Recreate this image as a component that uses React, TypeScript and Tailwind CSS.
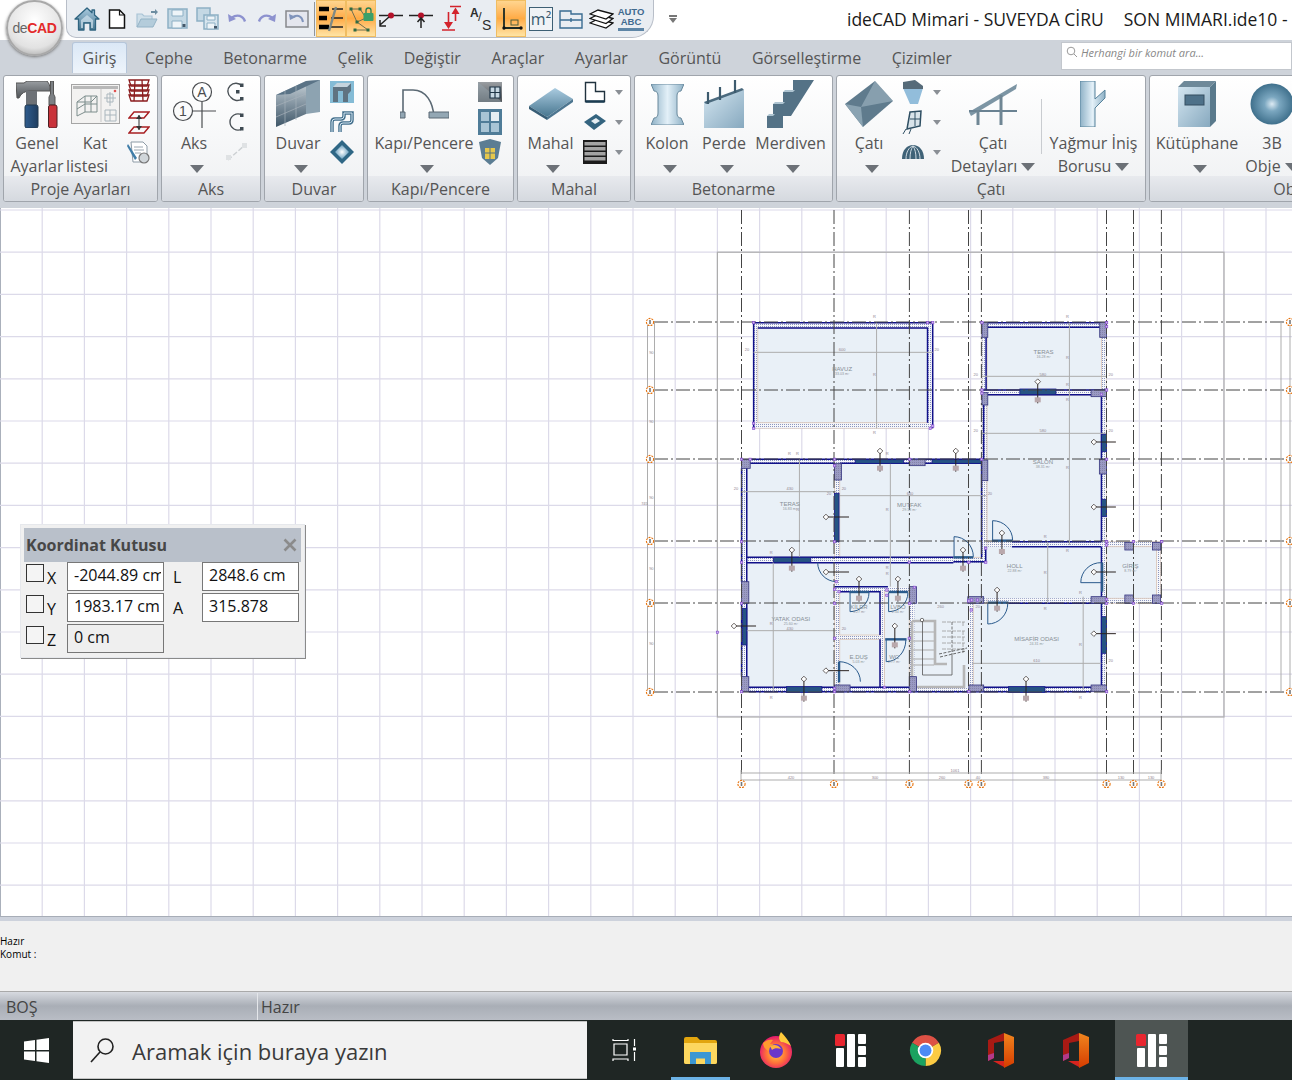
import React from "react";
import clsx from "clsx";

// plan coordinates were read off a crop, so map them back to page pixels
const X = (v: number) => 640 + v / 2.904;
const Y = (v: number) => 300 + v / 3;

type B = [number, number, number, number];

const gridX = Array.from({ length: 31 }, (_, i) => 42.2 * (i + 1));
const gridY = Array.from({ length: 17 }, (_, i) => 210 + 42.2 * i);
const axesV = [741.5, 834, 909.4, 968.5, 981.4, 1106.5, 1133.5, 1161.4];
const axesH = [322, 390, 459, 541, 603, 692];

const hatched: B[] = [
    [330, 68, 850, 385],
    [993, 68, 1355, 1175],
    [295, 478, 1008, 1175],
    [1355, 725, 1512, 910],
];
const rooms: B[] = [
    [342, 84, 835, 368],
    [1008, 82, 1340, 270],
    [1008, 285, 1340, 725],
    [310, 490, 565, 772],
    [580, 490, 992, 772],
    [580, 875, 697, 1005],
    [580, 1018, 697, 1162],
    [710, 875, 782, 1162],
    [310, 788, 565, 1162],
    [968, 910, 1340, 1162],
    [1355, 740, 1500, 895],
];
// the dark wall lines, interior partitions only get the tan edge
const navy = [
    "M330 385V68H850V385",
    "M342 84H835V368",
    "M1010 68H1340M1010 82H1335M1005 112V270M993 270H1355M1008 284H1310",
    "M998 285V478M1340 290V725M1080 725H1340",
    "M320 478H993M320 490H565M580 490H992V772M295 505V845M295 910V1130",
    "M310 490V1162M310 772H910M310 788H910M910 785H1004V740M1080 740H1340",
    "M1070 910H1340M1340 740V1162M316 1162H565M610 1162H782M998 1162H1310",
    "M316 1175H1310M580 875H697V1005M697 1018V1162M565 860H720",
];
const columns: B[] = [
    [295, 478, 320, 505],
    [565, 490, 585, 540],
    [782, 478, 828, 497],
    [993, 480, 1010, 542],
    [295, 845, 316, 910],
    [1334, 478, 1355, 522],
    [993, 68, 1010, 112],
    [1335, 68, 1355, 112],
    [993, 278, 1010, 315],
    [1310, 270, 1355, 290],
    [782, 860, 803, 910],
    [952, 890, 998, 910],
    [1310, 890, 1355, 910],
    [1408, 727, 1433, 750],
    [1488, 727, 1512, 750],
    [1408, 885, 1433, 910],
    [1488, 885, 1512, 910],
    [295, 1130, 316, 1175],
    [565, 1155, 610, 1175],
    [782, 1130, 803, 1175],
    [955, 1155, 998, 1175],
    [1310, 1155, 1355, 1175],
];
const windows: B[] = [
    [1103, 267, 1208, 284],
    [388, 772, 496, 787],
    [625, 479, 765, 490],
    [848, 479, 992, 490],
    [425, 1160, 528, 1177],
    [1070, 1160, 1176, 1177],
    [1340, 403, 1355, 455],
    [1340, 598, 1355, 650],
    [1340, 950, 1355, 1060],
    [298, 925, 310, 1035],
    [565, 580, 578, 725],
];
const doors: [number, number, number, number, number][] = [
    [1024, 662, 1082, 720, 1],
    [912, 710, 968, 770, 1],
    [610, 935, 665, 878, 0],
    [722, 935, 778, 878, 0],
    [715, 1085, 772, 1020, 0],
    [1010, 972, 1068, 910, 0],
    [578, 1085, 640, 1145, 1],
];
const dims: B[] = [
    [687, 68, 687, 385],
    [1247, 68, 1247, 735],
    [463, 478, 463, 772],
    [727, 490, 727, 860],
    [387, 770, 387, 1175],
    [1184, 725, 1184, 910],
    [1287, 890, 1287, 1170],
    [330, 157, 850, 157],
    [990, 229, 1355, 229],
    [990, 400, 1355, 400],
    [295, 575, 570, 575],
    [580, 587, 1005, 587],
    [300, 992, 570, 992],
    [965, 1090, 1340, 1090],
];
const markV: [number, number, number][] = [
    [1155, 245, 310], [697, 453, 515], [917, 453, 515], [441, 750, 815],
    [636, 837, 905], [749, 837, 905], [740, 978, 1045], [1051, 699, 765],
    [938, 750, 815], [1037, 870, 935], [476, 1137, 1205], [1121, 1137, 1205],
];
const markH: [number, number, number][] = [
    [1318, 426, 1382], [1318, 621, 1382], [540, 651, 607], [540, 816, 607],
    [273, 978, 337], [540, 1112, 607], [1318, 816, 1382], [1318, 1001, 1382],
];
const labels: [string, string, number, number][] = [
    ["TERAS", "16.28 m²", 1172, 155],
    ["HAVUZ", "33.03 m²", 587, 207],
    ["SALON", "38.31 m²", 1170, 485],
    ["TERAS", "16.83 m²", 435, 611],
    ["MUTFAK", "29.18 m²", 782, 616],
    ["HOLL", "22.88 m²", 1088, 798],
    ["GİRİŞ", "8.79 m²", 1424, 798],
    ["KİLER", "3.27 m²", 636, 920],
    ["LVBO", "2.34 m²", 749, 920],
    ["YATAK ODASI", "25.60 m²", 438, 957],
    ["MİSAFİR ODASI", "24.31 m²", 1152, 1016],
    ["E.DUŞ", "5.03 m²", 635, 1071],
    ["WC", "2.77 m²", 738, 1072],
];
const nodes: [number, number][] = [
    [330, 68], [835, 68], [850, 68], [330, 370], [330, 385], [850, 378], [843, 385],
    [993, 68], [1355, 68], [1355, 80], [993, 270], [993, 280], [1355, 270], [1340, 283],
    [295, 478], [320, 478], [565, 478], [565, 497], [783, 478], [992, 478], [1355, 478],
    [295, 725], [565, 725], [1004, 745], [1355, 725], [1355, 735], [1433, 725], [1515, 725],
    [295, 787], [570, 845], [782, 787], [955, 787], [1004, 787],
    [565, 868], [578, 875], [717, 870], [717, 886], [797, 862],
    [295, 910], [565, 910], [783, 910], [955, 903], [963, 900], [980, 900], [962, 930],
    [1355, 898], [1355, 910], [1433, 910], [1515, 910], [225, 997],
    [565, 1015], [782, 1015], [710, 1162],
    [295, 1175], [565, 1165], [565, 1175], [783, 1175], [955, 1175], [1355, 1175],
];
const tiny: [string, number, number][] = [
    ["R", 681, 50], ["R", 1241, 50], ["20", 311, 149], ["20", 862, 149], ["600", 587, 149],
    ["R", 681, 224], ["R", 1241, 173], ["R", 1241, 252], ["R", 1241, 297], ["R", 681, 398],
    ["20", 975, 224], ["20", 1367, 224], ["580", 1170, 224], ["20", 975, 392], ["20", 1367, 392],
    ["580", 1170, 392], ["R", 1241, 503], ["R", 434, 460], ["R", 457, 460], ["R", 718, 460],
    ["20", 279, 566], ["430", 435, 566], ["20", 549, 580], ["20", 592, 566], ["640", 784, 581],
    ["20", 1016, 580], ["R", 458, 628], ["R", 718, 628], ["R", 1177, 708], ["R", 1241, 752],
    ["R", 381, 756], ["R", 718, 802], ["R", 718, 820], ["R", 1177, 816], ["R", 1279, 878],
    ["R", 1177, 925], ["260", 873, 919], ["20", 981, 919], ["430", 435, 986], ["R", 381, 970],
    ["20", 592, 985], ["R", 1279, 1034], ["610", 1152, 1081], ["20", 1367, 1081],
    ["R", 381, 1191], ["R", 1279, 1191], ["90", 33, 158], ["90", 33, 365], ["90", 33, 592],
    ["90", 33, 805], ["90", 33, 1030], ["745", 13, 610],
];
const bottomTiny: [string, number][] = [
    ["420", 791], ["300", 875], ["260", 942], ["40", 978], ["380", 1046], ["130", 1121], ["130", 1151],
];

function toPage(d: string) {
    // walk the short path strings and convert each number to page pixels
    return d.replace(/([MHVL])([\d.]+)(?: ([\d.]+))?/g, (_, c, a, b) => {
        if (c === "H") return `H${X(+a)}`;
        if (c === "V") return `V${Y(+a)}`;
        return `${c}${X(+a)} ${Y(+b)}`;
    });
}

function Rect({ b, ...rest }: { b: B } & React.SVGProps<SVGRectElement>) {
    return <rect x={X(b[0])} y={Y(b[1])} width={X(b[2]) - X(b[0])} height={Y(b[3]) - Y(b[1])} {...rest} />;
}

function Bubble({ x, y }: { x: number; y: number }) {
    return (
        <g>
            <circle cx={x} cy={y} r={3.6} fill="white" stroke="#e8730c" strokeWidth={1.1} strokeDasharray="2 1" />
            <rect x={x - 0.8} y={y - 2} width={1.6} height={4} fill="#777" />
        </g>
    );
}

function Stairs() {
    const steps = [621, 632, 641, 650, 659, 665];
    return (
        <g fill="none">
            <path d="M912 621V687H964V665M912 621H935V664H947" stroke="#b6b6b6" strokeWidth={2.6} />
            {steps.map((y) => (
                <path key={y} d={`M913 ${y}H934`} stroke="#b6b6b6" strokeWidth={1.2} />
            ))}
            {[622, 631, 637, 643, 649].map((y) => (
                <path key={y} d={`M942 ${y}H965M963 ${y}v4`} stroke="#999" strokeWidth={0.8} strokeDasharray="4 1" />
            ))}
            <path d="M922.5 620V675H952V653" stroke="#555" strokeWidth={0.8} />
            <path d="M939 654L967 648M940 657L966 651" stroke="#444" strokeWidth={0.8} strokeDasharray="3 1.5" />
            <path d="M952 622V652" stroke="#555" strokeWidth={0.8} strokeDasharray="3 1.5" />
            <circle cx={922} cy={620} r={1.7} fill="white" stroke="#444" strokeWidth={0.7} />
        </g>
    );
}

function Drawing() {
    return (
        <svg viewBox="0 208 1292 708" className="block h-full w-full">
            <defs>
                <pattern id="dots" width="2" height="2" patternUnits="userSpaceOnUse">
                    <rect width="2" height="2" fill="#f6f7fa" />
                    <rect width="1" height="1" fill="#8b96bf" />
                </pattern>
                <pattern id="col" width="2" height="2" patternUnits="userSpaceOnUse">
                    <rect width="2" height="2" fill="#9a9ac4" />
                    <rect width="1" height="1" fill="#8585a8" />
                </pattern>
            </defs>
            <g stroke="#dcdae9" strokeWidth={1.2}>
                {gridX.map((x) => (
                    <line key={x} x1={x} x2={x} y1={208} y2={916} />
                ))}
                {gridY.map((y) => (
                    <line key={y} x1={0} x2={1292} y1={y} y2={y} />
                ))}
            </g>
            <rect x={717.4} y={252.2} width={506.6} height={464.8} fill="none" stroke="#adadad" strokeWidth={1.2} />

            {/* plan */}
            {hatched.map((b, i) => (
                <Rect key={i} b={b} fill="url(#dots)" stroke="#d8c9c2" strokeWidth={0.8} />
            ))}
            <path
                d={toPage("M580 788H1005V740H1340V895H968V910H955V1162H797V862H580Z")}
                fill="#e9f0f7"
            />
            {rooms.map((b, i) => (
                <Rect key={i} b={b} fill="#e9f0f7" stroke="#dcc9bd" strokeWidth={0.9} />
            ))}
            <Stairs />
            {navy.map((d) => (
                <path key={d} d={toPage(d)} fill="none" stroke="#10108a" strokeWidth={1.5} />
            ))}
            {dims.map((b, i) => (
                <line key={i} x1={X(b[0])} y1={Y(b[1])} x2={X(b[2])} y2={Y(b[3])} stroke="#adadad" strokeWidth={1} />
            ))}
            {columns.map((b, i) => (
                <Rect key={i} b={b} fill="url(#col)" stroke="#34347e" strokeWidth={0.8} />
            ))}
            {windows.map((b, i) => (
                <Rect key={i} b={b} fill="#265483" stroke="#16168e" strokeWidth={0.8} />
            ))}
            <g fill="none" stroke="#2a5a8c" strokeWidth={1}>
                {doors.map((d, i) => (
                    <path
                        key={i}
                        d={`M${X(d[0])} ${Y(d[3])}L${X(d[0])} ${Y(d[1])}A${X(d[2]) - X(d[0])} ${Math.abs(Y(d[3]) - Y(d[1]))} 0 0 ${d[4]} ${X(d[2])} ${Y(d[3])}`}
                    />
                ))}
                <path d={`M${X(516)} ${Y(788)}A19 19 0 0 0 ${X(570)} ${Y(845)}`} />
                <path d={`M${X(1340)} ${Y(788)}A20 20 0 0 0 ${X(1280)} ${Y(848)}H${X(1340)}`} />
            </g>
            <g stroke="#2a5a8c" strokeWidth={2.4}>
                <path d={`M${X(1022)} ${Y(722)}H${X(1082)}`} />
                <path d={`M${X(910)} ${Y(772)}H${X(968)}`} />
                <path d={`M${X(608)} ${Y(876)}H${X(666)}`} />
                <path d={`M${X(722)} ${Y(876)}H${X(778)}`} />
                <path d={`M${X(712)} ${Y(1018)}H${X(774)}`} />
                <path d={`M${X(1010)} ${Y(908)}H${X(1070)}`} />
                <path d={`M${X(1342)} ${Y(788)}V${Y(875)}`} />
                <path d={`M${X(578)} ${Y(1085)}V${Y(1147)}`} />
            </g>

            {/* axes */}
            <g stroke="#444" strokeWidth={1} strokeDasharray="14 3 2 3">
                {axesV.map((x) => (
                    <line key={x} x1={x} x2={x} y1={210} y2={776} />
                ))}
                {axesH.map((y) => (
                    <line key={y} x1={654} x2={1288} y1={y} y2={y} />
                ))}
            </g>
            <g stroke="#adadad" strokeWidth={1} fill="none">
                <path d="M647.500 322V692M654.500 322V692M1281 322V692M1290 322V692" />
                <path d="M741 773H1161M741 780H1161M741 770V782M1161 770V782" />
            </g>
            {axesH.map((y) => (
                <g key={y}>
                    <Bubble x={650} y={y} />
                    <Bubble x={1290} y={y} />
                </g>
            ))}
            {axesV.map((x) => (
                <Bubble key={x} x={x} y={784} />
            ))}

            {/* level marks */}
            <g stroke="#2b2320" strokeWidth={1}>
                {markV.map(([x, a, b]) => (
                    <g key={x + "-" + a}>
                        <line x1={X(x)} x2={X(x)} y1={Y(a)} y2={Y(b)} />
                        <path
                            d={`M${X(x) - 2.8} ${Y(a)}L${X(x)} ${Y(a) - 2.8}L${X(x) + 2.8} ${Y(a)}L${X(x)} ${Y(a) + 2.8}Z`}
                            fill="white"
                            strokeWidth={0.7}
                        />
                        <rect x={X(x) - 3} y={Y(b - 18)} width={6} height={5} fill="#b9a8ac" stroke="none" />
                    </g>
                ))}
                {markH.map(([a, y, b]) => (
                    <g key={a + "-" + y}>
                        <line x1={X(a)} x2={X(b)} y1={Y(y)} y2={Y(y)} />
                        <path
                            d={`M${X(a) - 2.8} ${Y(y)}L${X(a)} ${Y(y) - 2.8}L${X(a) + 2.8} ${Y(y)}L${X(a)} ${Y(y) + 2.8}Z`}
                            fill="white"
                            strokeWidth={0.7}
                        />
                    </g>
                ))}
            </g>
            {nodes.map(([x, y], i) => (
                <rect key={i} x={X(x) - 1.2} y={Y(y) - 1.2} width={2.4} height={2.4} fill="#cdb6ee" stroke="#8245cf" strokeWidth={0.6} />
            ))}

            {/* small print */}
            <g fontFamily="Liberation Sans, sans-serif" textAnchor="middle">
                {labels.map(([a, b, x, y]) => (
                    <g key={a + x}>
                        <text x={X(x)} y={Y(y) + 2} fontSize={6} fill="#868e95">{a}</text>
                        <text x={X(x)} y={Y(y) + 6} fontSize={3.6} fill="#90969b">{b}</text>
                    </g>
                ))}
                {tiny.map(([t, x, y], i) => (
                    <text key={i} x={X(x)} y={Y(y) + 1.5} fontSize={4} fill="#8f8590">{t}</text>
                ))}
                <text x={955} y={772} fontSize={4} fill="#8f8590">1061</text>
                {bottomTiny.map(([t, x]) => (
                    <text key={x} x={x} y={779} fontSize={4} fill="#8f8590">{t}</text>
                ))}
            </g>
        </svg>
    );
}

// quick access icons
const steel = "#a9c4d6";

function Home() {
    return (
        <svg width="26" height="24" viewBox="0 0 26 24">
            <path d="M13 1L1 12h3.500v11H10v-7h6v7h5.500V12H25L20.500 8V3H18v2.800z" fill="url(#gSteel)" stroke="#2f6480" strokeWidth="1.300" strokeLinejoin="round" />
            <path d="M7 13l6-5 6 5v8h-2v-6H9v6H7z" fill="#d8e8f2" opacity=".65" />
        </svg>
    );
}
function Doc() {
    return (
        <svg width="18" height="20" viewBox="0 0 18 20">
            <path d="M1.500 1h10l5 5v13h-15z" fill="white" stroke="#111" strokeWidth="1.500" />
            <path d="M11.500 1v5h5" fill="none" stroke="#111" strokeWidth="1.200" />
        </svg>
    );
}
function OpenFolder() {
    return (
        <svg width="23" height="20" viewBox="0 0 23 20">
            <path d="M1 18V5h5l2 2h8v3" fill="#cfdfe9" stroke={steel} strokeWidth="1.200" />
            <path d="M1 18l4-8h16l-4 8z" fill="#b4ccdb" stroke="#94b3c6" />
            <path d="M15 2h4V0l3 3-3 3V4h-4z" fill="#6d8da1" />
        </svg>
    );
}
function Save() {
    return (
        <svg width="21" height="21" viewBox="0 0 21 21">
            <path d="M1 1h19v19H1z" fill="#c4d8e4" stroke="#8db0c5" strokeWidth="1.500" />
            <path d="M5 2h11v6H5z" fill="#eef4f8" stroke="#8db0c5" />
            <path d="M5 13h10v7H5z" fill="#eef4f8" stroke="#8db0c5" />
            <rect x="15.500" y="16" width="3" height="3" fill="#44586a" />
        </svg>
    );
}
function SaveAll() {
    return (
        <svg width="23" height="23" viewBox="0 0 23 23">
            <path d="M1 1h13v13H1z" fill="#c4d8e4" stroke="#8db0c5" strokeWidth="1.500" />
            <path d="M8 8h14v14H8z" fill="#d7e5ee" stroke="#8db0c5" strokeWidth="1.500" />
            <path d="M11 9h8v4h-8zM11 16h8v6h-8z" fill="#eef4f8" stroke="#8db0c5" />
            <rect x="18" y="19" width="3" height="2.500" fill="#44586a" />
        </svg>
    );
}
function Undo({ flip }: { flip?: boolean }) {
    return (
        <svg width="20" height="14" viewBox="0 0 20 14" className={clsx(flip && "-scale-x-100")}>
            <path d="M5 5.500c5-3.500 11-2 13 4" fill="none" stroke="#8d92cf" strokeWidth="2.400" />
            <path d="M1 2l1 8 7-3z" fill="#8d92cf" />
        </svg>
    );
}
function BackBox() {
    return (
        <svg width="24" height="18" viewBox="0 0 24 18">
            <rect x="1" y="1" width="22" height="16" fill="#e4e6ee" stroke="#86888c" strokeWidth="1.500" />
            <path d="M8 7c5-2.500 9-1 10 5" fill="none" stroke="#7f93bb" strokeWidth="2" />
            <path d="M4 4l1 6 6-3z" fill="#7f93bb" />
        </svg>
    );
}
function Layers() {
    return (
        <svg width="26" height="26" viewBox="0 0 26 26">
            <path d="M1 3h10M1 12h8M1 21h10" stroke="#000" strokeWidth="4.500" />
            <path d="M14 3h11M13 12h12M12 21h13" stroke="#222" strokeWidth="1.500" />
            <path d="M11 25L18 1" stroke="#7f8a86" strokeWidth="2.400" />
        </svg>
    );
}
function LockSnap() {
    return (
        <svg width="26" height="26" viewBox="0 0 26 26">
            <path d="M3 3h9l6 9-9 4 11 8H7M3 3l6 13" fill="none" stroke="#6f6f50" strokeWidth="1" />
            {[[3, 3], [12, 3], [9, 16], [7, 24], [20, 24]].map(([x, y]) => (
                <rect key={x + "-" + y} x={x - 1.5} y={y - 1.5} width="3" height="3" fill="#2f6b45" />
            ))}
            <path d="M18 7V4.500a2.500 2.500 0 015 0V7" fill="none" stroke="#2b7f52" strokeWidth="1.300" />
            <rect x="15.500" y="7" width="10" height="8" rx="1" fill="#3aa06a" />
        </svg>
    );
}
function Snap({ side }: { side?: boolean }) {
    return (
        <svg width="26" height="20" viewBox="0 0 26 20">
            <path d="M1 6.500h24" stroke="#222" strokeWidth="1.500" />
            <circle cx="13" cy="6.500" r="3" fill="#b3122a" />
            {side ? (
                <path d="M11 8L2 16M2 11v6h6" fill="none" stroke="#222" strokeWidth="1.500" />
            ) : (
                <path d="M13 19V9M9.500 13L13 9l3.500 4" fill="none" stroke="#222" strokeWidth="1.500" />
            )}
        </svg>
    );
}
function RedArrows() {
    return (
        <svg width="21" height="27" viewBox="0 0 21 27">
            <path d="M9 1.500h11M14.500 9v7M1 25h13M7.500 7v10" stroke="#d3232c" strokeWidth="1.600" fill="none" />
            <path d="M14.500 2.500L10.500 9h8zM7.500 24L3 17h9z" fill="#d3232c" />
        </svg>
    );
}
function AS() {
    return (
        <svg width="22" height="26" viewBox="0 0 22 26" fontFamily="Liberation Sans, sans-serif" fill="#2c2c2c">
            <text x="0" y="11" fontSize="12" fontWeight="700">A</text>
            <text x="8" y="15" fontSize="13">/</text>
            <text x="12" y="24" fontSize="14">S</text>
        </svg>
    );
}
function Dim() {
    return (
        <svg width="26" height="26" viewBox="0 0 26 26">
            <path d="M6 2v20h18" fill="none" stroke="#1d2a24" strokeWidth="1.800" />
            <rect x="13" y="14" width="7" height="5" fill="none" stroke="#4e5d3a" strokeWidth="1" />
            <circle cx="6" cy="22" r="1.700" fill="#111" />
            <circle cx="23" cy="22" r="1.700" fill="#111" />
        </svg>
    );
}
function Plan() {
    return (
        <svg width="24" height="21" viewBox="0 0 24 21">
            <path d="M1 3h11v3h11v14H1zM1 12h22M12 10v4" fill="none" stroke="#3a6c92" strokeWidth="1.400" />
        </svg>
    );
}
function Stack() {
    return (
        <svg width="25" height="21" viewBox="0 0 25 21">
            <g fill="white" stroke="#111" strokeWidth="1.300">
                <path d="M1 15l8-4 15 4-7 5z" />
                <path d="M1 10.500l8-4 15 4-7 5z" />
                <path d="M1 6l8-4 15 4-7 5z" />
            </g>
        </svg>
    );
}

function Qa({ children, on }: { children?: React.ReactNode; on?: boolean }) {
    return (
        <div
            className={clsx(
                "flex h-[37px] w-[30px] shrink-0 items-center justify-center",
                on && "bg-linear-to-b from-[#ffd792] via-[#ffab44] to-[#ffe7a8] shadow-[inset_0_0_0_1px_#f0bd62]"
            )}
        >
            {children}
        </div>
    );
}

// ribbon icons
function Hammer() {
    return (
        <svg width="42" height="47" viewBox="0 0 42 47">
            <path d="M0 2h8l3-2h20q3 3 3 7v3H14Q6 10 3 17H1z" fill="url(#gDark)" stroke="#555" />
            <rect x="10" y="10" width="11" height="14" fill="#6d7176" />
            <rect x="9" y="24" width="13" height="23" rx="2" fill="url(#gBlue)" stroke="#20384f" />
            <path d="M34.500 0h3v13l1.500 3v8h-6v-8l1.500-3z" fill="#7c8084" stroke="#555" />
            <rect x="32.500" y="24" width="8.500" height="23" rx="2" fill="#c9323a" stroke="#4a1f22" />
        </svg>
    );
}
function KatIcon() {
    return (
        <svg width="49" height="40" viewBox="0 0 49 40">
            <rect x=".5" y=".5" width="48" height="39" fill="#f3f2f1" stroke="#a5a5a5" />
            <rect x="2" y="2" width="45" height="3" fill="#b8b8b8" />
            <circle cx="44" cy="7" r="1.300" fill="#e05050" />
            <path d="M30 5v33" stroke="#c7c7c7" />
            <path d="M6 18l8-6h12M6 18v14M14 12v16M6 32l8-4h12M6 25l8-5h12M26 12v16M20 12v16M6 18h14l6-6" fill="none" stroke="#7d8d8c" />
            <path d="M33 14h12M39 8v14M36 10h6v8h-6zM34 26h11v11H34zM34 31h11M39 26v11" fill="none" stroke="#aab6bd" />
        </svg>
    );
}
function RedStack() {
    return (
        <svg width="22" height="26" viewBox="0 0 22 26">
            <g fill="none" stroke="#8b1c1e" strokeWidth="1.300">
                {[1, 6, 11, 16].map((y) => (
                    <path key={y} d={`M1 ${y}h20l-2 6H3z`} />
                ))}
                <path d="M7 1l-1 21M14 1l1 21" />
            </g>
        </svg>
    );
}
function RedLevel() {
    return (
        <svg width="22" height="24" viewBox="0 0 22 24">
            <path d="M6 2h15l-5 6H1zM6 17h15l-5 6H1z" fill="none" stroke="#a81f22" strokeWidth="1.400" />
            <path d="M11 5v15" stroke="#333" />
            <path d="M8 9l3-4 3 4zM8 16l3 4 3-4z" fill="#333" />
        </svg>
    );
}
function Report() {
    return (
        <svg width="24" height="24" viewBox="0 0 24 24">
            <path d="M4 2h12l4 4v16H6z" fill="white" stroke="#8d9ba6" />
            <path d="M7 7h9M7 10h10M8 13h6" stroke="#9aa6b0" />
            <path d="M1 4l9 14-2 2L0 6z" fill="#3f7da8" />
            <circle cx="17" cy="18" r="5" fill="#d0d6da" stroke="#777" strokeWidth="1.200" />
        </svg>
    );
}
function AksIcon() {
    return (
        <svg width="44" height="47" viewBox="0 0 44 47" fontFamily="Liberation Sans, sans-serif">
            <g fill="none" stroke="#4a4d50" strokeWidth="1.200">
                <circle cx="30" cy="11" r="9.500" />
                <circle cx="11" cy="30" r="9.500" />
                <path d="M30 21v26M21 30h23" />
            </g>
            <text x="30" y="16" fontSize="14" textAnchor="middle" fill="#4a4d50">A</text>
            <text x="11" y="35" fontSize="14" textAnchor="middle" fill="#4a4d50">1</text>
        </svg>
    );
}
function Arc({ open }: { open?: boolean }) {
    return (
        <svg width="20" height="20" viewBox="0 0 20 20">
            <path d={open ? "M15 4A8 8 0 104 15.500 8 8 0 0015 17" : "M15 3A8 8 0 003 10a8 8 0 0012 7"} fill="none" stroke="#4b5257" strokeWidth="1.400" />
            <rect x="13" y="1.500" width="3.500" height="3.500" fill="#3e4a52" />
            <rect x="13" y="15" width="3.500" height="3.500" fill="#3e4a52" />
            {open && <rect x="9" y="8" width="3.500" height="3.500" fill="#3e4a52" />}
        </svg>
    );
}
function AxisFaint() {
    return (
        <svg width="24" height="22" viewBox="0 0 24 22">
            <path d="M3 19L21 3" stroke="#ccd0d3" strokeWidth="1.400" strokeDasharray="5 2" />
            <rect x="1" y="14" width="5" height="5" fill="#dfe2e4" />
            <rect x="17" y="2" width="5" height="5" fill="#dfe2e4" />
        </svg>
    );
}
function WallIcon() {
    return (
        <svg width="44" height="48" viewBox="0 0 44 48">
            <path d="M0 15L30 1v33L0 47z" fill="url(#gWall)" />
            <path d="M30 1l14-1v32l-14 2z" fill="#8da3b1" />
            <path d="M0 15L30 1l14-1-30 14z" fill="#5a7386" />
            <path d="M9 11v35M20 6v34M0 26l30-12M0 37l30-13" stroke="#a7b2ba" strokeWidth=".7" />
        </svg>
    );
}
function WallCorner() {
    return (
        <svg width="24" height="22" viewBox="0 0 24 22">
            <path d="M0 0h24v22H0z" fill="#85bcd6" />
            <path d="M3 21V6h14l4-4v8l-3 3v8h-5V10H8v11z" fill="#5f7381" />
            <path d="M3 6l4-4h14l-4 4z" fill="#c5d4dd" />
        </svg>
    );
}
function WallCurve() {
    return (
        <svg width="24" height="22" viewBox="0 0 24 22">
            <path d="M2 21V11q0-3 3-3h6q3 0 3-3V2h8v7q0 3-3 3h-6q-3 0-3 3v6" fill="none" stroke="#436f8c" strokeWidth="3.500" />
            <path d="M2 21V11q0-3 3-3h6q3 0 3-3V2h8v7q0 3-3 3h-6q-3 0-3 3v6" fill="none" stroke="#d4e6f1" strokeWidth="1" />
        </svg>
    );
}
function WallDiamond() {
    return (
        <svg width="24" height="24" viewBox="0 0 24 24">
            <path d="M12 0l12 12-12 12L0 12z" fill="#2f6785" />
            <path d="M12 5l7 7-7 7-7-7z" fill="url(#gGlow)" />
        </svg>
    );
}
function DoorIcon() {
    return (
        <svg width="49" height="32" viewBox="0 0 49 32">
            <path d="M3 29V2h10c13 0 20 12 21 27" fill="none" stroke="#5b6974" strokeWidth="1.600" />
            <path d="M0 24h5v6H0zM29 24h20v6H29z" fill="#93a7b4" stroke="#5b6974" />
        </svg>
    );
}
function WinA() {
    return (
        <svg width="24" height="20" viewBox="0 0 24 20">
            <rect width="24" height="20" fill="url(#gDark)" />
            <path d="M0 0l24 20H0z" fill="#96a5af" opacity=".5" />
            <path d="M12 5h10v11H12zM17 5v11M12 10.500h10" fill="#c7d8e3" stroke="#1e3546" strokeWidth="1.200" />
        </svg>
    );
}
function WinB() {
    return (
        <svg width="24" height="26" viewBox="0 0 24 26">
            <rect width="24" height="26" fill="#4f7c98" />
            <path d="M3 3h8v9H3zM13 3h8v9h-8zM3 14h8v9H3zM13 14h8v9h-8z" fill="#a8c4d5" />
            <path d="M13 3h8v9h-8z" fill="#e6eef3" />
        </svg>
    );
}
function WinC() {
    return (
        <svg width="24" height="26" viewBox="0 0 24 26">
            <path d="M1 3l11-3 11 3-3 16-8 7-8-7z" fill="#5b7d93" />
            <path d="M7 9h10v11H7z" fill="#e6c84d" />
            <path d="M12 9v11M7 14h10" stroke="#54707f" />
        </svg>
    );
}
function SlabIcon() {
    return (
        <svg width="44" height="32" viewBox="0 0 44 32">
            <path d="M0 18L26 0l18 11-26 18z" fill="url(#gSteel)" />
            <path d="M0 18l18 11v3L0 21z" fill="#375d75" />
            <path d="M18 29l26-18v3L18 32z" fill="#4d7690" />
        </svg>
    );
}
function LShape() {
    return (
        <svg width="22" height="22" viewBox="0 0 22 22">
            <path d="M1.500 1.500h10v9h9v10h-19z" fill="white" stroke="#20323e" strokeWidth="1.400" />
            <path d="M1.500 20.500h19" stroke="#1b3c52" strokeWidth="2.500" />
        </svg>
    );
}
function Tile() {
    return (
        <svg width="22" height="16" viewBox="0 0 22 16">
            <path d="M0 8l12-8 10 7-12 9z" fill="#34647f" />
            <path d="M7 7l5-3 4 3-5 3z" fill="#e6eef2" />
        </svg>
    );
}
function Lines() {
    return (
        <svg width="24" height="24" viewBox="0 0 24 24">
            <rect width="24" height="24" fill="#1b1b1b" />
            {[2, 7, 12, 17].map((y) => (
                <rect key={y} x="1.500" y={y} width="21" height="3.500" fill="#a3a3a3" />
            ))}
        </svg>
    );
}
function KolonIcon() {
    return (
        <svg width="33" height="41" viewBox="0 0 33 41">
            <path d="M0 0h33l-3 7c-3 0-4 2-4 5v17c0 3 1 5 4 5l3 7H0l3-7c3 0 4-2 4-5V12c0-3-1-5-4-5z" fill="url(#gColumn)" stroke="#68889c" />
        </svg>
    );
}
function PerdeIcon() {
    return (
        <svg width="40" height="48" viewBox="0 0 40 48">
            <path d="M0 22L40 10v38H0z" fill="url(#gPanel)" />
            <path d="M0 22l38-14 2 2L2 24z" fill="#4b6a7e" />
            <path d="M4 12v12M16 7v13M31 0v13" stroke="#3d5b6e" strokeWidth="2.200" />
        </svg>
    );
}
function StairIcon() {
    return (
        <svg width="47" height="48" viewBox="0 0 47 48">
            <path d="M0 48V36h6V24h10V12h10V0h21L24 36h-8v12z" fill="#547286" />
            <path d="M6 24h10l2-2H8zM16 12h10l2-2H18zM0 36h6l2-2H2z" fill="#aec4d1" />
        </svg>
    );
}
function RoofIcon() {
    return (
        <svg width="48" height="46" viewBox="0 0 48 46">
            <path d="M0 23L30 0l18 20-30 26z" fill="#5f7b8d" />
            <path d="M0 23l16 3 2 20z" fill="#8aa3b2" />
            <path d="M16 26L30 0l18 20z" fill="#b9cbd6" opacity=".45" />
        </svg>
    );
}
function Dormer() {
    return (
        <svg width="24" height="26" viewBox="0 0 24 26">
            <path d="M2 9h20l-5 16H9z" fill="#92bddb" />
            <path d="M2 3l12-2 8 6v3H2z" fill="#566b79" />
        </svg>
    );
}
function Skylight() {
    return (
        <svg width="24" height="24" viewBox="0 0 24 24">
            <path d="M9 2l11-1-1 15-13 3z" fill="#d9e4ea" stroke="#2f4f63" strokeWidth="1.500" />
            <path d="M9 9h10M14 2v14" stroke="#2f4f63" />
            <path d="M5 19L2 24M10 19l-2 5" stroke="#2f4f63" />
        </svg>
    );
}
function Dome() {
    return (
        <svg width="24" height="14" viewBox="0 0 24 14">
            <path d="M1 14C1 5 6 0 12 0s11 5 11 14z" fill="#3f6277" />
            <path d="M5 14C5 7 8 2 12 1M9 14c0-6 1-10 3-13M15 14c0-6-1-10-3-13M19 14c0-7-3-12-7-13" stroke="#cfdae1" fill="none" />
        </svg>
    );
}
function RoofDetail() {
    return (
        <svg width="48" height="42" viewBox="0 0 48 42">
            <path d="M0 29L48 1l-1 5L2 33z" fill="#7c95a4" />
            <path d="M0 29h48" stroke="#6a8292" strokeWidth="2" transform="translate(0 -1)" />
            <path d="M9 27v15M32 12v30" stroke="#6f8694" strokeWidth="3" />
        </svg>
    );
}
function PipeIcon() {
    return (
        <svg width="27" height="46" viewBox="0 0 27 46">
            <path d="M0 0h15v18l10-9v8L15 27v19H0z" fill="url(#gColumn)" stroke="#56829b" />
        </svg>
    );
}
function LibIcon() {
    return (
        <svg width="38" height="46" viewBox="0 0 38 46">
            <path d="M0 6h32v40H0z" fill="url(#gPanel)" />
            <path d="M0 6l6-6h32l-6 6z" fill="#6e8999" />
            <path d="M32 6l6-6v40l-6 6z" fill="#5a7a8c" />
            <rect x="7" y="14" width="19" height="10" fill="#4e7189" stroke="#344e60" />
        </svg>
    );
}
function Sphere() {
    return (
        <svg width="46" height="42" viewBox="0 0 46 42">
            <ellipse cx="23" cy="21" rx="21.500" ry="20.500" fill="url(#gSphere)" />
        </svg>
    );
}

function Caret({ small }: { small?: boolean }) {
    return small ? (
        <span className="inline-block h-0 w-0 border-x-[4px] border-t-[5px] border-x-transparent border-t-[#8a8f95]" />
    ) : (
        <span className="inline-block h-0 w-0 border-x-[7px] border-t-[8px] border-x-transparent border-t-[#6c7177]" />
    );
}

function Group({ className, title, children }: { className: string; title: string; children: React.ReactNode }) {
    return (
        <div
            className={clsx(
                "flex h-[127px] shrink-0 flex-col overflow-hidden rounded-[3px] border border-[#a0a5ac] bg-linear-to-b from-white to-[#eef0f2]",
                className
            )}
        >
            <div className="flex h-[100px] shrink-0">{children}</div>
            <div className="relative flex h-[25px] items-center justify-center bg-linear-to-b from-[#e8eaee] to-[#d5d9df] pt-px whitespace-nowrap">
                {title}
            </div>
        </div>
    );
}

function Big({
    className,
    icon,
    l1,
    l2,
    noCaret,
    l2Class,
}: {
    className: string;
    icon: React.ReactNode;
    l1: string;
    l2?: React.ReactNode;
    noCaret?: boolean;
    l2Class?: string;
}) {
    return (
        <div className={clsx("flex shrink-0 flex-col items-center", className)}>
            <div className="flex h-[56px] shrink-0 items-center justify-center">{icon}</div>
            <div className="shrink-0 leading-[23px] whitespace-nowrap">{l1}</div>
            {l2 ? (
                <div className={clsx("flex shrink-0 items-center gap-1 leading-[23px] whitespace-nowrap", l2Class)}>
                    {l2}
                    {!noCaret && <Caret />}
                </div>
            ) : (
                <div className="shrink-0 pt-[4px] pl-[5px] leading-none">
                    <Caret />
                </div>
            )}
        </div>
    );
}

function SmallCol({ className, items, carets }: { className: string; items: React.ReactNode[]; carets?: boolean }) {
    return (
        <div className={clsx("flex shrink-0 flex-col pt-px", className)}>
            {items.map((icon, i) => (
                <div key={i} className={clsx("flex h-[30px] items-center", carets ? "justify-start" : "justify-center")}>
                    <span className={clsx("flex items-center justify-center", carets && "w-[24px]")}>{icon}</span>
                    {carets && (
                        <span className="ml-[8px] flex">
                            <Caret small />
                        </span>
                    )}
                </div>
            ))}
        </div>
    );
}

function Ribbon() {
    return (
        <div className="flex h-[135px] gap-[3px] overflow-hidden bg-[#ced3da] pt-[2px] pl-[3px]">
            <Group className="w-[155px]" title="Proje Ayarları">
                <Big className="w-[66px]" icon={<Hammer />} l1="Genel" l2="Ayarlar" noCaret />
                <Big className="w-[50px]" icon={<KatIcon />} l1="Kat" l2="listesi" noCaret l2Class="-ml-[4px] self-start" />
                <SmallCol className="w-[38px]" items={[<RedStack />, <RedLevel />, <Report />]} />
            </Group>
            <Group className="w-[100px]" title="Aks">
                <Big className="w-[64px]" icon={<AksIcon />} l1="Aks" />
                <SmallCol className="w-[22px]" items={[<Arc open />, <Arc />, <AxisFaint />]} />
            </Group>
            <Group className="w-[100px]" title="Duvar">
                <Big className="w-[66px]" icon={<WallIcon />} l1="Duvar" />
                <SmallCol className="w-[22px]" items={[<WallCorner />, <WallCurve />, <WallDiamond />]} />
            </Group>
            <Group className="w-[147px]" title="Kapı/Pencere">
                <Big className="w-[112px]" icon={<DoorIcon />} l1="Kapı/Pencere" />
                <SmallCol className="w-[20px]" items={[<WinA />, <WinB />, <WinC />]} />
            </Group>
            <Group className="w-[114px]" title="Mahal">
                <Big className="w-[65px]" icon={<SlabIcon />} l1="Mahal" />
                <SmallCol className="w-[42px]" carets items={[<LShape />, <Tile />, <Lines />]} />
            </Group>
            <Group className="w-[199px]" title="Betonarme">
                <Big className="w-[64px]" icon={<KolonIcon />} l1="Kolon" />
                <Big className="w-[50px]" icon={<PerdeIcon />} l1="Perde" />
                <Big className="w-[83px]" icon={<StairIcon />} l1="Merdiven" />
            </Group>
            <Group className="w-[310px]" title="Çatı">
                <Big className="w-[64px]" icon={<RoofIcon />} l1="Çatı" />
                <SmallCol className="w-[44px]" carets items={[<Dormer />, <Skylight />, <Dome />]} />
                <Big className="w-[96px]" icon={<RoofDetail />} l1="Çatı" l2="Detayları" />
                <div className="mt-[23px] h-[55px] w-px shrink-0 bg-[#c9ccd0]" />
                <Big className="w-[103px]" icon={<PipeIcon />} l1="Yağmur İniş" l2="Borusu" />
            </Group>
            <Group className="w-[284px]" title="Obje">
                <Big className="w-[94px]" icon={<LibIcon />} l1="Kütüphane" />
                <Big className="w-[56px]" icon={<Sphere />} l1="3B" l2="Obje" />
            </Group>
        </div>
    );
}

function Field({ value, off }: { value: string; off?: boolean }) {
    return (
        <div className={clsx("h-[29px] w-[97px] shrink-0 border border-[#777] pl-[6px]", off ? "bg-[#efefef]" : "bg-white")}>
            <div className="w-[87px] overflow-hidden text-[16px] leading-[25px] whitespace-nowrap">{value}</div>
        </div>
    );
}

function CoordRow({ name, value, label, second, off }: { name: string; value: string; label?: string; second?: string; off?: boolean }) {
    return (
        <div className="flex h-[31px] items-start">
            <span className="mt-[2px] ml-[2px] h-[18px] w-[18px] shrink-0 border border-[#333] bg-[#f4f4f4]" />
            <span className="mt-[6px] w-[23px] pl-[3px] text-[16px] leading-[20px]">{name}</span>
            <Field value={value} off={off} />
            {label && <span className="mt-[5px] w-[38px] pl-[9px] text-[16px] leading-[20px]">{label}</span>}
            {second && <Field value={second} />}
        </div>
    );
}

function CoordBox() {
    return (
        <div className="absolute top-[524px] left-[20px] h-[134px] w-[285px] border border-[#e6e8ec] bg-[#f0f0f0] p-[3px] text-[#111] shadow-[1px_1px_0_#8a8a8a]">
            <div className="flex h-[34px] items-center justify-between bg-[#b9c0ca] pr-[4px] pl-[2px]">
                <span className="text-[16px] font-bold text-[#474747]">Koordinat Kutusu</span>
                <svg width="14" height="14" viewBox="0 0 14 14">
                    <path d="M1.500 1.500l11 11M12.500 1.500l-11 11" stroke="#8b8b8b" strokeWidth="2.600" />
                </svg>
            </div>
            <CoordRow name="X" value="-2044.89 cm" label="L" second="2848.6 cm" />
            <CoordRow name="Y" value="1983.17 cm" label="A" second="315.878" />
            <CoordRow name="Z" value="0 cm" off />
        </div>
    );
}

function IdeTask() {
    return (
        <svg width="31" height="33" viewBox="0 0 31 33">
            <rect x="0" y="0" width="10" height="12" rx="1.500" fill="#e8262f" />
            <rect x="1" y="14" width="8" height="19" rx="1" fill="white" />
            <rect x="12" y="0" width="8" height="33" rx="1" fill="white" />
            <rect x="23" y="0" width="8" height="10" rx="1" fill="white" />
            <rect x="23" y="12" width="8" height="9" rx="1" fill="white" />
            <rect x="23" y="23" width="8" height="10" rx="1" fill="white" />
        </svg>
    );
}
function Office() {
    return (
        <svg width="28" height="35" viewBox="0 0 28 35">
            <path d="M17 0l10 4v26l-10 5z" fill="url(#gOrange)" />
            <path d="M17 0L1 7v21l6-3V10l10-2z" fill="#a81a14" />
            <path d="M1 22v6l6-3v-5z" fill="#b23a88" />
            <path d="M6 28l11 6v-6z" fill="#d6241f" />
        </svg>
    );
}
function TaskSlot({ children, active, open }: { children: React.ReactNode; active?: boolean; open?: boolean }) {
    return (
        <div
            className={clsx(
                "relative flex h-[60px] shrink-0 items-center justify-center",
                active ? "ml-[2px] w-[73px] bg-[#4e5553]" : "w-[75px]"
            )}
        >
            {children}
            {active && <span className="absolute inset-x-0 bottom-0 h-[3px] bg-[#6cb2e6]" />}
            {open && <span className="absolute inset-x-[8px] bottom-0 h-[3px] bg-[#6cb2e6]" />}
        </div>
    );
}

export default function App() {
    return (
        <div className="relative flex h-[1080px] w-[1292px] flex-col overflow-hidden bg-white font-['Open_Sans',sans-serif] text-[16px] text-[#555]">
            {/* gradients used by the drawn icons */}
            <svg className="absolute h-0 w-0">
                <defs>
                    <linearGradient id="gSteel" x1="0" y1="0" x2="0" y2="1">
                        <stop offset="0" stopColor="#aacbe0" />
                        <stop offset="1" stopColor="#47768f" />
                    </linearGradient>
                    <linearGradient id="gDark" x1="0" y1="0" x2="0" y2="1">
                        <stop offset="0" stopColor="#9a9ea2" />
                        <stop offset="1" stopColor="#4f5357" />
                    </linearGradient>
                    <linearGradient id="gBlue" x1="0" y1="0" x2="1" y2="0">
                        <stop offset="0" stopColor="#2f5c8d" />
                        <stop offset="1" stopColor="#1f3d60" />
                    </linearGradient>
                    <linearGradient id="gWall" x1="0" y1="0" x2="0" y2="1">
                        <stop offset="0" stopColor="#c8d2d9" />
                        <stop offset="1" stopColor="#3e5668" />
                    </linearGradient>
                    <linearGradient id="gColumn" x1="0" y1="0" x2="1" y2="0">
                        <stop offset="0" stopColor="#8eb1c6" />
                        <stop offset=".5" stopColor="#e3f0f8" />
                        <stop offset="1" stopColor="#8eb1c6" />
                    </linearGradient>
                    <linearGradient id="gPanel" x1="0" y1="0" x2="1" y2="1">
                        <stop offset="0" stopColor="#d3e5f0" />
                        <stop offset="1" stopColor="#87a9bf" />
                    </linearGradient>
                    <linearGradient id="gOrange" x1="0" y1="0" x2="0" y2="1">
                        <stop offset="0" stopColor="#f0851e" />
                        <stop offset="1" stopColor="#d63c00" />
                    </linearGradient>
                    <radialGradient id="gGlow">
                        <stop offset="0" stopColor="#ffffff" />
                        <stop offset="1" stopColor="#6aa0bf" />
                    </radialGradient>
                    <radialGradient id="gSphere">
                        <stop offset="0" stopColor="#dceaf3" />
                        <stop offset=".35" stopColor="#7ba7c0" />
                        <stop offset="1" stopColor="#3f708c" />
                    </radialGradient>
                    <radialGradient id="gFox" cx=".5" cy=".55" r=".55">
                        <stop offset="0" stopColor="#ffd23f" />
                        <stop offset=".55" stopColor="#ff7139" />
                        <stop offset="1" stopColor="#e3176f" />
                    </radialGradient>
                </defs>
            </svg>

            {/* title row */}
            <div className="flex h-[40px] shrink-0 items-start bg-white">
                <div className="ml-[66px] flex h-[38px] w-[588px] shrink-0 items-center rounded-br-[22px] rounded-bl-[10px] border-r border-b border-l border-[#b8bec8] bg-[#e9edf2] pl-[5px]">
                    <Qa><Home /></Qa>
                    <Qa><Doc /></Qa>
                    <Qa><OpenFolder /></Qa>
                    <Qa><Save /></Qa>
                    <Qa><SaveAll /></Qa>
                    <Qa><Undo /></Qa>
                    <Qa><Undo flip /></Qa>
                    <Qa><BackBox /></Qa>
                    <span className="mr-px ml-[2px] h-[34px] w-px bg-[#8f959c]" />
                    <Qa on><Layers /></Qa>
                    <Qa on><LockSnap /></Qa>
                    <Qa><Snap side /></Qa>
                    <Qa><Snap /></Qa>
                    <Qa><RedArrows /></Qa>
                    <Qa><AS /></Qa>
                    <Qa on><Dim /></Qa>
                    <Qa>
                        <span className="flex h-[24px] w-[24px] items-center justify-center border border-[#3d5f74] bg-[#f0f3f6] text-[16px] leading-none text-[#3a5a6f]">
                            m²
                        </span>
                    </Qa>
                    <Qa><Plan /></Qa>
                    <Qa><Stack /></Qa>
                    <Qa>
                        <span className="flex flex-col items-center border-b-[3px] border-[#5d85a6] pb-px font-['Liberation_Sans',sans-serif] text-[9.5px] leading-[10px] font-bold text-[#3f6a8f]">
                            <span>AUTO</span>
                            <span>ABC</span>
                        </span>
                    </Qa>
                </div>
                <div className="ml-[14px] flex h-[38px] w-[10px] flex-col items-center justify-center gap-px">
                    <span className="h-[2px] w-[8px] bg-[#777]" />
                    <span className="h-0 w-0 border-x-[4px] border-t-[5px] border-x-transparent border-t-[#777]" />
                </div>
                <div className="ml-[169px] pt-[6px] text-[17.5px] leading-[26px] whitespace-nowrap text-[#1a1a1a]">
                    ideCAD Mimari - SUVEYDA CİRU<span className="ml-[20px]">SON MIMARI.ide10 -</span>
                </div>
            </div>

            {/* tabs */}
            <div className="flex h-[33px] shrink-0 items-end bg-[#ced3da] pl-[72px]">
                <div className="flex h-[31px] w-[55px] items-center justify-center rounded-t-[3px] border border-b-0 border-[#b6c6da] bg-linear-to-b from-[#dbe8f6] to-[#eef4fb]">
                    Giriş
                </div>
                <div className="flex h-[31px] items-center gap-[30.6px] pl-[18px] whitespace-nowrap">
                    {["Cephe", "Betonarme", "Çelik", "Değiştir", "Araçlar", "Ayarlar", "Görüntü", "Görselleştirme", "Çizimler"].map((t) => (
                        <span key={t}>{t}</span>
                    ))}
                </div>
                <div className="mb-[3px] ml-auto flex h-[28px] w-[231px] shrink-0 gap-[3px] border border-[#c3c7cd] bg-white pt-px pl-[4px] text-[11px] leading-[17px] text-[#888] italic">
                    <svg width="12" height="12" viewBox="0 0 12 12" className="mt-[2px]">
                        <circle cx="5" cy="5" r="3.800" fill="none" stroke="#9a9a9a" />
                        <path d="M8 8l3 3" stroke="#9a9a9a" />
                    </svg>
                    Herhangi bir komut ara...
                </div>
            </div>

            <Ribbon />

            {/* drawing area */}
            <div className="h-[708px] shrink-0 bg-white shadow-[inset_1px_0_0_#aab0bb]">
                <Drawing />
            </div>
            <div className="h-[5px] shrink-0 border-t border-[#a7adb7] bg-[#cdd2dc]" />

            {/* command window */}
            <div className="h-[71px] shrink-0 border-b border-[#a9a9a9] bg-[#f0f0f0] pt-[14px] text-[10px] leading-[13px] text-black">
                <div>Hazır</div>
                <div>Komut :</div>
            </div>

            {/* status bar */}
            <div className="flex h-[28px] shrink-0 bg-linear-to-b from-[#d7dae0] via-[#a9aeb6] to-[#b9bdc5] pt-px leading-[28px] text-[#444]">
                <div className="w-[258px] border-r border-[#e4e6ea] pl-[6px]">BOŞ</div>
                <div className="pl-[3px]">Hazır</div>
            </div>

            {/* taskbar */}
            <div className="flex h-[60px] shrink-0 bg-[#1f2624]">
                <div className="flex w-[73px] shrink-0 items-center justify-center pr-[1px]">
                    <svg width="25" height="25" viewBox="0 0 25 25">
                        <path d="M0 3.500L11 2v10H0zM12.500 1.800L25 0v12H12.500zM0 13.500h11v9.500L0 21.500zM12.500 13.500H25V25l-12.500-1.800z" fill="white" />
                    </svg>
                </div>
                <div className="flex h-[58px] w-[514px] shrink-0 items-center self-center border-y border-[#c4c4c4] bg-[#f2f2f2] pl-[16px] text-[22px] text-[#3a3a3a]">
                    <svg width="28" height="28" viewBox="0 0 28 28">
                        <circle cx="16.500" cy="10.500" r="7.500" fill="none" stroke="#222" strokeWidth="1.600" />
                        <path d="M11 16L2 26" stroke="#222" strokeWidth="1.600" />
                    </svg>
                    <span className="ml-[15px] pt-[2px] whitespace-nowrap">Aramak için buraya yazın</span>
                </div>
                <div className="w-px shrink-0" />
                <TaskSlot>
                    <svg width="24" height="24" viewBox="0 0 24 24" fill="none" stroke="white" strokeWidth="1.200" className="mr-[4px]">
                        <path d="M1 1v1.500h15V1M2 6h13v11H2zM1 23v-2h15v2M22.500 1v7M22.500 14v9" />
                        <rect x="21" y="9.500" width="3" height="3" fill="white" stroke="none" />
                    </svg>
                </TaskSlot>
                <TaskSlot open>
                    <svg width="33" height="27" viewBox="0 0 33 27">
                        <path d="M0 2q0-2 2-2h11l3 3h15q2 0 2 2v20q0 2-2 2H2q-2 0-2-2z" fill="#e2a50e" />
                        <path d="M0 6h33v19q0 2-2 2H2q-2 0-2-2z" fill="#fdd75f" />
                        <path d="M6 14h21v13h-6v-6h-9v6H6z" transform="translate(0 2) scale(1 .93)" fill="#3c97d3" />
                    </svg>
                </TaskSlot>
                <TaskSlot>
                    <svg width="34" height="36" viewBox="0 0 34 36">
                        <circle cx="17" cy="20" r="16" fill="url(#gFox)" />
                        <path d="M22 0c4 4 8 9 10 14-3-2-7-4-10-4-3-3-2-7 0-10z" fill="#ffc93a" />
                        <path d="M4 11c3-3 7-4 10-3l-3 4c4 0 7 2 9 4-4-1-9 0-11 3-3-2-5-5-5-8z" fill="#ff9a2e" />
                        <circle cx="17" cy="19" r="7" fill="#6a36c9" />
                        <path d="M11 14c4-2 9-1 11 3-3-1-7-1-9 1z" fill="#ffb13b" />
                    </svg>
                </TaskSlot>
                <TaskSlot><IdeTask /></TaskSlot>
                <TaskSlot>
                    <svg width="33" height="33" viewBox="0 0 32 32">
                        <path d="M16 16L3 8.500A15 15 0 0129 8.500z" fill="#dd5145" />
                        <path d="M16 16L29 8.500A15 15 0 0116 31z" fill="#fccb43" />
                        <path d="M16 16L16 31A15 15 0 013 8.500z" fill="#1ba260" />
                        <circle cx="16" cy="16" r="7.500" fill="white" />
                        <circle cx="16" cy="16" r="5.800" fill="#4c8bf5" />
                    </svg>
                </TaskSlot>
                <TaskSlot><Office /></TaskSlot>
                <TaskSlot><Office /></TaskSlot>
                <TaskSlot active><IdeTask /></TaskSlot>
            </div>

            <CoordBox />

            {/* round logo sits over the title and tab rows */}
            <div className="absolute top-0 left-[6px] flex h-[56px] w-[57px] items-center justify-center rounded-full border-2 border-[#a9a9a9] shadow-[0_1px_3px_#777] [background:radial-gradient(circle_at_50%_35%,#fff,#e2e2e2_65%,#8f8f8f)]">
                <span className="font-['Liberation_Sans',sans-serif] text-[14px] font-bold tracking-tight text-[#e32b2b]">
                    <span className="font-normal text-[#666]">de</span>CAD
                </span>
            </div>
        </div>
    );
}
